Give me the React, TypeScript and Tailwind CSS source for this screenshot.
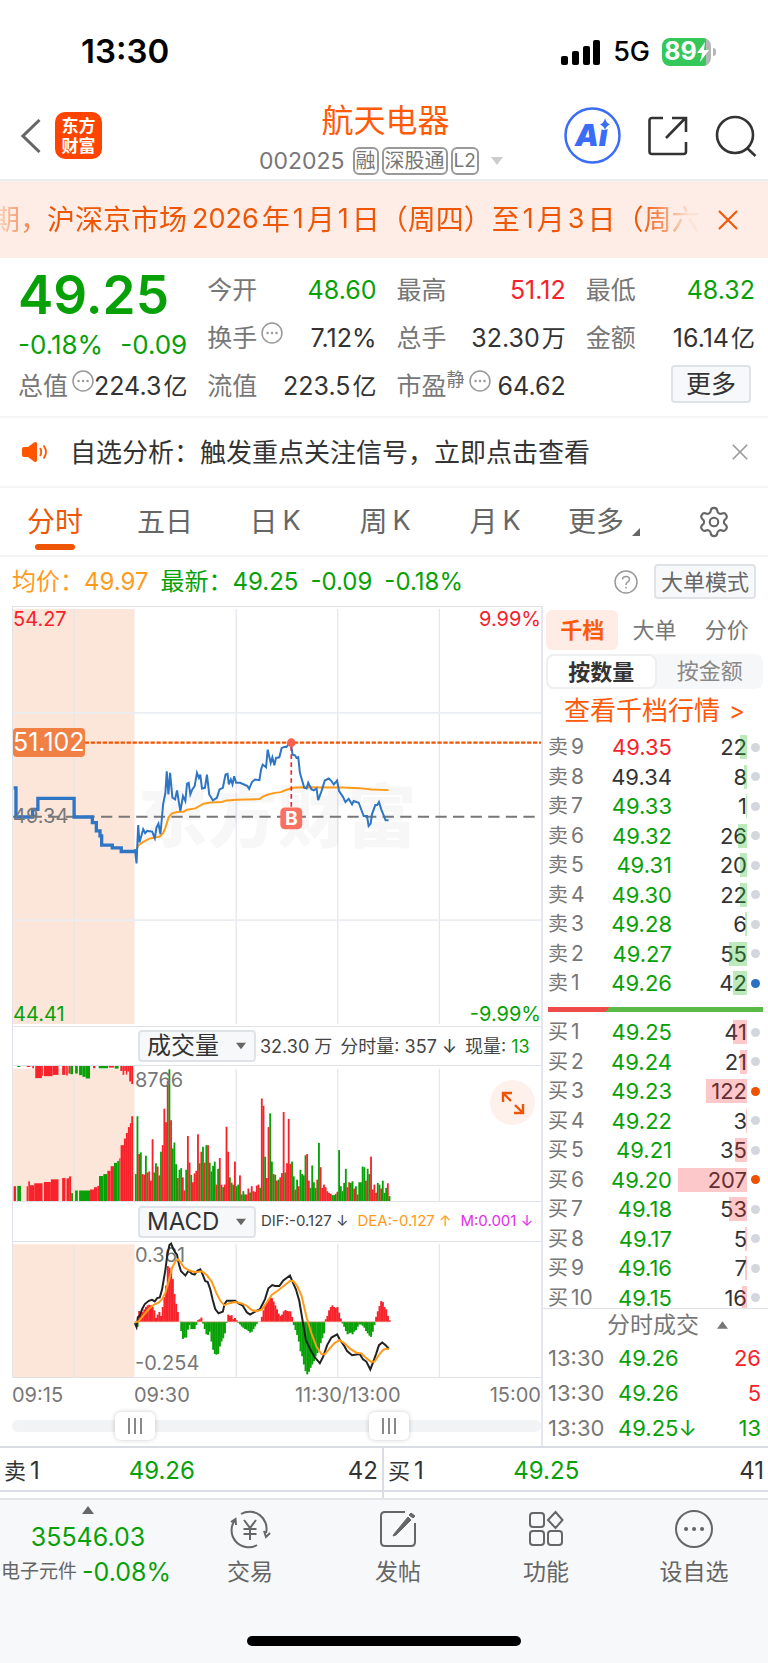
import { useState } from "react";
import { Settings } from "lucide-react";

type Level = {
	label: string;
	price: string;
	qty: number;
	priceColor?: string;
	dot?: string;
};

const GREEN = "text-[#07a107]";
const RED = "text-[#f7222a]";

const asks: Level[] = [
	{ label: "卖9", price: "49.35", qty: 22, priceColor: RED },
	{ label: "卖8", price: "49.34", qty: 8, priceColor: "text-[#333]" },
	{ label: "卖7", price: "49.33", qty: 1 },
	{ label: "卖6", price: "49.32", qty: 26 },
	{ label: "卖5", price: "49.31", qty: 20 },
	{ label: "卖4", price: "49.30", qty: 22 },
	{ label: "卖3", price: "49.28", qty: 6 },
	{ label: "卖2", price: "49.27", qty: 55 },
	{ label: "卖1", price: "49.26", qty: 42, dot: "bg-[#2b6fc4]" },
];

const bids: Level[] = [
	{ label: "买1", price: "49.25", qty: 41 },
	{ label: "买2", price: "49.24", qty: 21 },
	{ label: "买3", price: "49.23", qty: 122, dot: "bg-[#ee5200]" },
	{ label: "买4", price: "49.22", qty: 3 },
	{ label: "买5", price: "49.21", qty: 35 },
	{ label: "买6", price: "49.20", qty: 207, dot: "bg-[#ee5200]" },
	{ label: "买7", price: "49.18", qty: 53 },
	{ label: "买8", price: "49.17", qty: 5 },
	{ label: "买9", price: "49.16", qty: 7 },
	{ label: "买10", price: "49.15", qty: 16 },
];

const ticks = [
	{ time: "13:30", price: "49.26", qty: 26, color: RED },
	{ time: "13:30", price: "49.26", qty: 5, color: RED },
	{ time: "13:30", price: "49.25↓", qty: 13, color: GREEN },
];

// One entry per minute, negative = down bar
const volume = [
	-82, -258, 143, -148, 82, 80, -138, 87, 90, 62, 188, -87, -115, 105, 78, -150, 170, 281, 240, 365,
	-401, 246, -160, -178, -112, 70, -95, -100, 72, 32, -95, 198, 117, -80, 57, 84, 92, 203, -115, 150,
	-165, 117, -170, 170, -117, -90, -107, -120, 50, -98, 131, 50, -42, 50, 226, 150, -72, 56, -50, 120,
	-45, -50, 78, -20, -30, -20, 20, 38, -26, 45, 30, 28, 47, 50, -40, 312, 290, -135, 70, 225,
	-267, -120, 82, -80, 62, -65, 72, 85, 271, -87, 115, 250, 113, -120, -75, 35, -65, 45, -95, -82,
	-78, -139, 143, 62, -40, -108, -57, -40, 65, -177, 103, 40, 50, 42, 30, 25, 22, -18, -18, -22,
	28, -155, -45, -30, -55, -98, 42, 57, -55, -60, 38, -45, 20, -57, -57, -105, -103, 62, -98, -82,
	135, 35, 50, 25, -55, -50, 38, -62, -25, -40, 54, -15,
];

const macd = [
	-8, -15, 33, 30, 30, 38, 45, 50, 52, 50, 45, 35, 12, 22, 30, 18, 45, 75, 110, 170,
	165, 155, 130, 85, 55, 30, 0, -28, -52, -48, -48, -24, -10, -22, -22, -22, -10, 5, 8, 13,
	-5, -22, -38, -40, -30, -60, -85, -98, -100, -98, -75, -60, -50, -35, -3, 22, 18, 20, 8, 12,
	5, -3, -8, -14, -18, -22, -24, -28, -33, -30, -22, -14, -6, 0, 0, 15, 35, 48, 58, 68,
	75, 72, 62, 50, 38, 25, 18, 22, 32, 36, 33, 32, 32, 15, -10, -25, -40, -60, -90, -105,
	-130, -150, -160, -152, -140, -130, -120, -105, -95, -85, -65, -50, -35, 8, 18, 35, 45, 50, 45, 42,
	45, 28, 10, -5, -15, -28, -38, -35, -33, -38, -30, -25, -15, -8, -8, -12, -18, -28, -35, -42,
	-46, -30, -10, 15, 32, 48, 63, 60, 45, 38, 18, 5,
];

// [x1, x2, height], call auction before the open
const auctionMatched = [
	[38, 45, 45], [49, 60, -46], [77, 81, 45], [82, 87, 60], [87, 100, 48], [100, 125, 54], [129, 150, 58],
	[150, 173, 66], [184, 194, 70], [197, 205, 69], [205, 211, 75], [211, 217, -24], [223, 231, -32],
	[235, 268, -32], [268, 280, 35], [280, 290, 42], [290, 295, 46], [295, 308, -76], [308, 320, -82],
	[320, 330, 92], [330, 340, 106], [340, 350, -116], [350, 356, -122], [356, 360, 130], [360, 370, 170],
	[370, 376, 190], [376, 382, 207], [382, 388, 225], [388, 392, 237], [392, 398, 258],
];

const auctionUnmatched = [
	[49, 58, -3], [77, 88, 3], [94, 99, 7], [103, 123, 37], [123, 126, 30], [129, 155, 31], [155, 173, 27],
	[184, 194, 27], [196, 201, 29], [203, 209, 23], [209, 217, -25], [223, 231, -23], [235, 245, -28],
	[245, 255, -33], [255, 268, -38], [277, 284, 7], [294, 322, -7], [324, 340, 5], [342, 354, -8],
	[359, 366, 15], [366, 371, 27], [371, 376, 15], [376, 380, 26], [380, 386, 17], [386, 392, 47], [392, 398, 55],
];

const AUCTION_LINE =
	"38,560 45,560 45,648 95,648 95,625 111,625 111,592 220,592 220,648 275,648 275,665 287,665 287,690 298,690 298,705 303,705 303,733 335,733 335,741 362,741 362,752 403,752";

const PRICE_LINE =
	"403,745 408,788 413,672 417,725 428,685 434,697 440,690 455,692 463,712 468,680 474,668 480,700 488,610 495,575 499,510 504,580 509,515 516,590 524,595 530,568 535,600 540,630 548,585 555,600 560,548 565,545 570,580 576,565 583,555 590,515 596,530 600,520 605,562 614,560 620,520 627,580 638,598 650,590 658,565 668,560 676,520 682,518 686,550 692,535 697,550 702,525 708,545 720,545 742,555 747,563 756,542 765,535 778,537 783,505 788,490 798,498 803,445 812,485 817,468 823,492 828,470 838,468 845,440 855,436 860,437 868,425 873,428 878,460 885,462 890,470 895,468 900,515 913,560 920,562 925,545 935,565 942,568 950,562 955,597 965,570 975,538 987,532 995,540 1002,550 1012,538 1018,570 1030,588 1037,603 1047,593 1057,610 1062,600 1077,605 1092,645 1102,645 1107,675 1113,668 1117,640 1127,612 1133,612 1138,603 1145,625 1158,658 1167,658";

const AVERAGE_LINE =
	"408,745 415,732 430,722 445,714 463,710 478,707 488,697 495,680 505,648 515,637 530,633 550,632 560,626 585,622 610,608 630,604 665,603 680,598 710,596 778,594 790,586 805,580 820,576 842,573 860,566 880,560 910,558 1030,559 1080,561 1115,565 1167,567";

const DIF_LINE =
	"403,368 408,380 412,350 418,345 425,325 433,310 445,300 455,297 463,302 470,292 478,290 485,265 490,235 495,205 500,165 507,130 512,126 518,140 524,152 530,160 536,190 542,210 550,218 555,223 565,208 575,218 583,220 592,208 600,204 605,215 615,240 622,242 630,265 637,295 645,325 655,338 668,333 673,310 680,300 705,300 715,308 728,315 740,335 750,342 765,333 780,325 795,295 805,262 817,252 825,255 838,255 850,238 870,223 877,240 888,265 898,300 908,360 918,420 935,455 945,472 960,490 970,470 982,435 995,412 1012,402 1020,418 1032,435 1042,453 1057,466 1080,462 1090,478 1100,485 1112,509 1120,488 1130,460 1138,435 1148,427 1158,435 1168,446";

const DEA_LINE =
	"403,366 415,362 428,345 445,325 460,312 475,305 485,295 495,275 505,240 515,200 525,180 533,173 540,182 550,197 565,207 585,213 605,210 620,222 635,243 648,275 660,300 672,313 685,308 705,304 725,308 740,315 755,328 770,332 785,327 800,305 815,282 835,268 855,252 870,240 880,240 892,255 905,285 920,350 935,400 950,440 965,462 975,463 990,445 1005,428 1020,420 1035,430 1050,445 1070,458 1085,460 1100,475 1115,486 1125,485 1140,462 1152,448 1168,446";

const barColor = (v: number) => (v < 0 ? "#07a107" : "#f7222a");
const barX = (i: number) => 403 + i * 5.06;

const Triangle = ({ className, up }: { className: string; up?: boolean }) => (
	<svg viewBox="0 0 12 8" className={className} fill="currentColor" aria-hidden="true">
		<path d={up ? "M6 0 12 8H0Z" : "M0 0H12L6 8Z"} />
	</svg>
);

const Close = ({ className }: { className: string }) => (
	<svg viewBox="0 0 20 20" className={className} fill="none" stroke="currentColor" strokeWidth="2" aria-hidden="true">
		<path d="M1 1 19 19M19 1 1 19" />
	</svg>
);

const MoreInfo = () => (
	<svg viewBox="0 0 22 22" className="mb-3 ml-1 size-[22px] shrink-0 text-[#999]" fill="none" stroke="currentColor" aria-hidden="true">
		<circle cx="11" cy="11" r="10" strokeWidth="1.5" />
		<path d="M6.5 11h.1M11 11h.1M15.5 11h.1" strokeWidth="2.4" strokeLinecap="round" />
	</svg>
);

const StatusBar = () => (
	<div className="flex h-[100px] items-center justify-between pt-1 pr-[52px] pl-[81px] text-black">
		<span className="text-[33px] font-semibold">13:30</span>
		<div className="flex items-center gap-3">
			<svg viewBox="0 0 40 25" className="h-[25px] w-10" aria-hidden="true">
				<rect x="0" y="16" width="7" height="9" rx="2" />
				<rect x="11" y="11" width="7" height="14" rx="2" />
				<rect x="22" y="6" width="7" height="19" rx="2" />
				<rect x="32" y="0" width="7" height="25" rx="2" />
			</svg>
			<span className="text-[27px] font-medium">5G</span>
			<div className="flex items-center gap-[2px]">
				<div className="flex h-7 w-[49px] items-center justify-center rounded-lg bg-[linear-gradient(90deg,#34c759_89%,#b5b5b5_89%)] text-white">
					<span className="text-[25px] font-bold">89</span>
					<svg viewBox="0 0 12 20" className="h-5 w-3" fill="currentColor" aria-hidden="true">
						<path d="M8 0 0 11h5L3 20 12 8H7Z" />
					</svg>
				</div>
				<div className="h-2 w-[3px] rounded-r bg-[#b5b5b5]" />
			</div>
		</div>
	</div>
);

const Header = () => (
	<header className="grid h-[81px] grid-cols-[1fr_auto_1fr] items-center border-b-2 border-[#ebedf0] pr-[11px] pl-[21px]">
		<div className="flex items-center gap-[14px] pb-2">
			<button aria-label="返回">
				<svg viewBox="0 0 20 34" className="h-[34px] w-5 text-[#666]" fill="none" stroke="currentColor" strokeWidth="3">
					<path d="M18.500 1 2 17 18.500 33" />
				</svg>
			</button>
			<a
				href="#home"
				className="flex size-[47px] flex-col items-center justify-center rounded-[10px] bg-[#ff4400] text-[17px] leading-5 font-bold text-white"
			>
				<span>东方</span>
				<span>财富</span>
			</a>
		</div>
		<div className="flex flex-col items-center pr-[15px] pb-[2px]">
			<h1 className="pl-2 text-[32px] leading-9 text-[#ff5a0a]">航天电器</h1>
			<button className="mt-2 flex items-center gap-[3px] text-[#777]">
				<span className="mr-[5px] text-[23px] leading-7">002025</span>
				<span className="rounded-md border-2 border-[#999] px-px text-[20px] leading-6">融</span>
				<span className="rounded-md border-2 border-[#999] px-px text-[20px] leading-6">深股通</span>
				<span className="rounded-md border-2 border-[#999] px-px text-[19px] leading-6">L2</span>
				<Triangle className="ml-2 h-2 w-[14px] text-[#ccc]" />
			</button>
		</div>
		<div className="flex items-center justify-end gap-[27px] pb-2 text-[#333]">
			<button aria-label="Ai">
				<svg viewBox="0 0 57 57" className="size-[57px]" aria-hidden="true">
					<circle cx="28.500" cy="28.500" r="27" fill="none" stroke="#3a6cf6" strokeWidth="2.500" />
					<text x="11" y="39" fontSize="30" fontWeight="900" fontStyle="italic" fill="#3a6cf6">
						Ai
					</text>
					<circle cx="40" cy="17" r="6" fill="#fff" />
					<path d="M41 11Q42 16 46 17.500 42 19 41 23 40 19 36 17.500 40 16 41 11Z" fill="#3a6cf6" />
				</svg>
			</button>
			<button aria-label="分享">
				<svg viewBox="0 0 40 40" className="size-10" fill="none" stroke="currentColor" strokeWidth="2.600">
					<path d="M15 2H4Q1.500 2 1.500 4.500V35.500Q1.500 38 4 38H35.500Q38 38 38 35.500V26M18 22 37 2.500M24 2H38V16" />
				</svg>
			</button>
			<button aria-label="搜索">
				<svg viewBox="0 0 42 42" className="size-[42px]" fill="none" stroke="currentColor" strokeWidth="2.600">
					<circle cx="20" cy="20" r="18" />
					<path d="M32 33 40.500 41" />
				</svg>
			</button>
		</div>
	</header>
);

const Notice = () => (
	<div className="flex h-[77px] items-center justify-between gap-5 bg-[#fdede6] pr-[30px] text-[#ee5606]">
		<p className="flex min-w-0 flex-1 items-center gap-[3px] overflow-hidden text-[28px] whitespace-nowrap [mask-image:linear-gradient(90deg,#0003,#000_50px,#000_640px,#0001_690px)]">
			<span className="-ml-2">期，</span>
			<span className="-ml-1">沪深京市场</span>
			<span className="ml-[2px] text-[27px]">2026</span>年<span className="text-[27px]">1</span>月
			<span className="text-[27px]">1</span>日（周四）至<span className="text-[27px]">1</span>月
			<span className="text-[27px]">3</span>日（周六）
		</p>
		<button aria-label="关闭公告">
			<Close className="size-5" />
		</button>
	</div>
);

type CellProps = { label: string; value: string; unit?: string; color?: string; info?: boolean; sup?: string };

const Cell = ({ label, value, unit, color = "text-[#333]", info, sup }: CellProps) => (
	<div className="flex h-12 items-center">
		<span className="shrink-0 text-[25px] text-[#777]">{label}</span>
		{sup && <span className="mb-4 text-[18px] text-[#777]">{sup}</span>}
		{info && <MoreInfo />}
		<span className={`ml-auto flex items-center gap-[2px] text-[25px] whitespace-nowrap ${color}`}>
			{value}
			{unit && <span className="text-[24px]">{unit}</span>}
		</span>
	</div>
);

const Quote = () => (
	<section className="grid grid-cols-4 gap-x-5 border-b-2 border-[#f3f4f6] pt-[9px] pr-[13px] pb-[5px] pl-[18px]">
		<div className={`row-span-2 flex flex-col ${GREEN}`}>
			<strong className="text-[53px] leading-[56px] font-semibold">49.25</strong>
			<div className="mt-1 flex justify-between text-[26px] leading-9">
				<span>-0.18%</span>
				<span>-0.09</span>
			</div>
		</div>
		<Cell label="今开" value="48.60" color={GREEN} />
		<Cell label="最高" value="51.12" color={RED} />
		<Cell label="最低" value="48.32" color={GREEN} />
		<Cell label="换手" value="7.12%" info />
		<Cell label="总手" value="32.30" unit="万" />
		<Cell label="金额" value="16.14" unit="亿" />
		<Cell label="总值" value="224.3" unit="亿" info />
		<Cell label="流值" value="223.5" unit="亿" />
		<Cell label="市盈" value="64.62" sup="静" info />
		<div className="flex items-center justify-end pr-1 pb-[6px]">
			<button className="h-[38px] w-20 rounded border-2 border-[#dfe3e8] bg-[#f7f8fa] text-[25px] leading-8 text-[#333]">更多</button>
		</div>
	</section>
);

const AnalysisTip = () => (
	<div className="flex h-[70px] items-center border-b-2 border-[#f3f4f6] pr-5 pl-[22px]">
		<svg viewBox="0 0 26 20" className="mr-[22px] h-5 w-[26px] text-[#ff5400]" fill="currentColor" aria-hidden="true">
			<path d="M2 5H6L12 .5Q15 -1 15 2V18Q15 21 12 19.500L6 15H2Q0 15 0 13V7Q0 5 2 5Z" />
			<path d="M18 6Q20.500 10 18 14M21.500 3.500Q26.500 10 21.500 16.500" fill="none" stroke="currentColor" strokeWidth="1.800" />
		</svg>
		<a href="#analysis" className="text-[26px] text-[#333]">
			自选分析：触发重点关注信号，立即点击查看
		</a>
		<button aria-label="关闭提示" className="ml-auto text-[#999]">
			<Close className="size-4" />
		</button>
	</div>
);

const tabs = [
	{ cn: "分时" },
	{ cn: "五日" },
	{ cn: "日", en: "K" },
	{ cn: "周", en: "K" },
	{ cn: "月", en: "K" },
];

const PeriodTabs = () => {
	const [active, setActive] = useState(0);
	return (
		<nav className="flex h-[69px] items-stretch border-b-2 border-[#f3f4f6] text-[28px] text-[#666]">
			{tabs.map((tab, i) => (
				<button
					key={tab.cn}
					onClick={() => setActive(i)}
					className={`relative flex w-[110px] items-center justify-center gap-[5px] ${active === i ? "text-[#ee5606]" : ""}`}
				>
					{tab.cn}
					{tab.en && <span className="text-[27px]">{tab.en}</span>}
					{active === i && <span className="absolute bottom-[5px] h-[6px] w-10 rounded-full bg-[#ee5606]" />}
				</button>
			))}
			<button className="ml-[18px] flex items-center gap-2">
				更多
				<svg viewBox="0 0 8 8" className="mt-5 size-2" fill="currentColor" aria-hidden="true">
					<path d="M8 0V8H0Z" />
				</svg>
			</button>
			<button aria-label="设置" className="mr-[37px] ml-auto">
				<Settings className="size-[34px]" strokeWidth={1.5} />
			</button>
		</nav>
	);
};

const PriceSummary = () => (
	<div className={`flex h-[49px] items-center px-3 text-[24px] ${GREEN}`}>
		<span className="text-[#ff9b1a]">均价：</span>
		<span className="text-[#ff9b1a]">49.97</span>
		<span className="ml-3">最新：</span>
		<span>49.25</span>
		<span className="ml-3">-0.09</span>
		<span className="ml-3">-0.18%</span>
		<button aria-label="帮助" className="ml-auto text-[#999]">
			<svg viewBox="0 0 24 24" className="size-6" fill="none" stroke="currentColor" strokeWidth="1.500">
				<circle cx="12" cy="12" r="11" />
				<path d="M8.500 9.500Q8.500 6.500 12 6.500 15.500 6.500 15.500 9.500 15.500 11 13.500 12.200 12 13 12 15M12 17V18.500" />
			</svg>
		</button>
		<button className="ml-4 h-[35px] rounded border-2 border-[#dfe3e8] bg-[#f7f8fa] px-[5px] text-[22px] leading-7 text-[#666]">大单模式</button>
	</div>
);

const Grid = ({ top, bottom }: { top: number; bottom: number }) => (
	<g stroke="#e4e7ed" strokeWidth="4">
		{[219, 708, 1014, 1320].map((x) => (
			<line key={x} x1={x} x2={x} y1={top} y2={bottom} />
		))}
	</g>
);

const PriceChart = () => (
	<div className="relative h-[421px] border-y border-[#dfe2e7] text-[20px] leading-6">
		<svg viewBox="36 15 1590 1263" preserveAspectRatio="none" className="size-full" fill="none">
			<rect x="36" y="21" width="366" height="1251" fill="#fce6da" />
			<Grid top={21} bottom={1272} />
			<path d="M36 334H1626M36 959H1626" stroke="#eaedf2" strokeWidth="5" />
			<text x="412" y="724" fontSize="210" fontWeight="900" fill="#000" fillOpacity="0.03">
				东方财富
			</text>
			<path d="M36 647H1626" stroke="#777" strokeWidth="6" strokeDasharray="34 19" />
			<path d="M36 424H1626" stroke="#ee5606" strokeWidth="7" strokeDasharray="13 5" />
			<polyline points={AVERAGE_LINE} stroke="#ff9b1a" strokeWidth="6" />
			<polyline points={AUCTION_LINE} stroke="#2f75c5" strokeWidth="10" />
			<polyline points={PRICE_LINE} stroke="#2f75c5" strokeWidth="6" />
			<path d="M874 435V620" stroke="#f7222a" strokeWidth="5" strokeDasharray="14 10" />
			<circle cx="874" cy="424" r="13" fill="#f9604f" />
			<rect x="841" y="619" width="66" height="66" rx="14" fill="#fb7161" />
			<text x="874" y="673" textAnchor="middle" fontSize="58" fontWeight="700" fill="#fff">
				B
			</text>
		</svg>
		<span className={`absolute top-0 left-0 ${RED}`}>54.27</span>
		<span className={`absolute top-0 right-0 ${RED}`}>9.99%</span>
		<span className="absolute top-[121px] left-0 rounded bg-[#f08043] text-[25px] leading-[29px] text-white">51.102</span>
		<span className="absolute top-[197px] left-0 text-[#777]">49.34</span>
		<span className={`absolute bottom-0 left-0 ${GREEN}`}>44.41</span>
		<span className={`absolute right-0 bottom-0 ${GREEN}`}>-9.99%</span>
	</div>
);

const IndicatorSelect = ({ label, options }: { label: string; options: string[] }) => (
	<div className="relative ml-[125px] h-8 w-[118px] shrink-0 text-[#333]">
		<select
			aria-label={label}
			className="size-full appearance-none rounded border-2 border-[#dfe3e8] bg-[#f7f8fa] pl-[7px] text-[24px] leading-7"
		>
			{options.map((o) => (
				<option key={o}>{o}</option>
			))}
		</select>
		<Triangle className="pointer-events-none absolute top-3 right-[10px] h-2 w-[10px] text-[#666]" />
	</div>
);

const VolumeChart = () => (
	<div className="relative h-[137px] border-y border-[#dfe2e7]">
		<svg viewBox="36 134 1590 411" preserveAspectRatio="none" className="size-full">
			<rect x="36" y="142" width="366" height="402" fill="#fce6da" />
			{auctionMatched.map(([x1, x2, h]) => (
				<rect key={x1} x={x1} y={545 - Math.abs(h)} width={x2 - x1} height={Math.abs(h)} fill={barColor(h)} />
			))}
			{auctionUnmatched.map(([x1, x2, h]) => (
				<rect key={x1} x={x1} y="134" width={x2 - x1} height={Math.abs(h)} fill={barColor(h)} />
			))}
			<Grid top={142} bottom={545} />
			{volume.map((v, i) => (
				<rect key={i} x={barX(i)} y={545 - Math.abs(v)} width="5.500" height={Math.abs(v)} fill={barColor(v)} />
			))}
		</svg>
		<span className="absolute top-0 left-[122px] text-[20px] leading-7 text-[#777]">8766</span>
		<button aria-label="全屏" className="absolute top-[14px] right-[6px] flex size-[45px] items-center justify-center rounded-full bg-[#fef1ec] text-[#ee5606]">
			<svg viewBox="0 0 24 24" className="size-6" fill="none" stroke="currentColor" strokeWidth="2.400">
				<path d="M2 11V2H11M2 2 10 10M22 13V22H13M22 22 14 14" />
			</svg>
		</button>
	</div>
);

const MacdChart = () => (
	<div className="relative h-[137px] border-y border-[#dfe2e7] text-[20px] leading-6 text-[#777]">
		<span className="absolute top-px left-[122px]">0.361</span>
		<span className="absolute bottom-[2px] left-[122px]">-0.254</span>
		<svg viewBox="36 121 1590 411" preserveAspectRatio="none" className="relative size-full" fill="none">
			<rect x="36" y="128" width="366" height="404" fill="#fce6da" />
			<Grid top={128} bottom={532} />
			{macd.map((v, i) => (
				<rect key={i} x={barX(i)} y={v < 0 ? 364 : 364 - v} width="6" height={Math.abs(v)} fill={barColor(v)} />
			))}
			<path d="M403 364H1168" stroke="#e9a08c" strokeWidth="2" />
			<polyline points={DIF_LINE} stroke="#222" strokeWidth="6" />
			<polyline points={DEA_LINE} stroke="#ff9b1a" strokeWidth="6" />
		</svg>
	</div>
);

const thumb =
	"pointer-events-none absolute inset-x-0 top-0 h-7 w-full appearance-none bg-transparent [&::-webkit-slider-thumb]:pointer-events-auto [&::-webkit-slider-thumb]:h-7 [&::-webkit-slider-thumb]:w-10 [&::-webkit-slider-thumb]:appearance-none [&::-webkit-slider-thumb]:rounded-md [&::-webkit-slider-thumb]:bg-white [&::-webkit-slider-thumb]:bg-[repeating-linear-gradient(90deg,#888_0_2px,transparent_2px_6px)] [&::-webkit-slider-thumb]:bg-[length:14px_16px] [&::-webkit-slider-thumb]:bg-center [&::-webkit-slider-thumb]:bg-no-repeat [&::-webkit-slider-thumb]:shadow-[0_0_5px_#0003]";

const RangeSlider = () => {
	const [from, setFrom] = useState(21);
	const [to, setTo] = useState(73);
	return (
		<div className="relative flex h-7 items-center">
			<div className="h-3 w-full rounded-full bg-[#f2f3f5]" />
			<input type="range" aria-label="起始时间" value={from} onChange={(e) => setFrom(+e.target.value)} className={thumb} />
			<input type="range" aria-label="结束时间" value={to} onChange={(e) => setTo(+e.target.value)} className={thumb} />
		</div>
	);
};

const Charts = () => (
	<div className="min-w-0 border-r-2 border-[#e4e7ed] pl-3">
		<div className="border-l border-[#dfe2e7]">
			<PriceChart />
			<div className="flex h-[38px] items-center text-[18px] whitespace-nowrap text-[#444]">
				<IndicatorSelect label="副图指标一" options={["成交量", "成交额", "量比"]} />
				<span className="ml-1">32.30 万</span>
				<span className="ml-2">分时量: 357 ↓</span>
				<span className="ml-2">
					现量: <span className={GREEN}>13</span>
				</span>
			</div>
			<VolumeChart />
			<div className="flex h-[39px] items-center gap-[9px] text-[15px] whitespace-nowrap">
				<IndicatorSelect label="副图指标二" options={["MACD", "KDJ", "RSI"]} />
				<span className="-ml-1 text-[#444]">DIF:-0.127 ↓</span>
				<span className="text-[#ff9b1a]">DEA:-0.127 ↑</span>
				<span className="text-[#e22fe8]">M:0.001 ↓</span>
			</div>
			<MacdChart />
		</div>
		<div className="grid h-[34px] grid-cols-[122px_1fr] items-center text-[20px] leading-[30px] text-[#777]">
			<span>09:15</span>
			<div className="flex justify-between">
				<span>09:30</span>
				<span className="pl-12">11:30/13:00</span>
				<span className="pl-8">15:00</span>
			</div>
		</div>
		<RangeSlider />
	</div>
);

const Depth = ({ levels, tint }: { levels: Level[]; tint: string }) => (
	<table className="w-full table-fixed text-[22px] leading-7">
		<tbody>
			{levels.map((level, i) => (
				<tr key={level.label} className={i % 2 ? "h-[29px]" : "h-[30px]"}>
					<th scope="row" className="w-14 p-0 pl-[5px] text-left font-normal text-[#777]">
						<span className="flex items-center gap-[3px] text-[20px]">
							{level.label[0]}
							<span className="text-[21px]">{level.label.slice(1)}</span>
						</span>
					</th>
					<td className={`p-0 text-right ${level.priceColor ?? GREEN}`}>{level.price}</td>
					<td className="w-24 p-0 pr-2">
						<div className="flex items-center justify-end gap-1">
							<span className="relative flex h-6 items-center text-[#333]">
								{level.qty}
								<span className={`absolute inset-y-0 right-0 ${tint}`} style={{ width: Math.max(1, level.qty / 3) }} />
							</span>
							<span className={`size-[9px] rounded-full ${level.dot ?? "bg-[#d3d6dc]"}`} />
						</div>
					</td>
				</tr>
			))}
		</tbody>
	</table>
);

const OrderBook = () => (
	<aside className="flex flex-col">
		<div className="mt-1 flex h-10 pr-[5px] pl-[3px] text-[22px] text-[#777]">
			<button className="flex-1 rounded-md bg-[#ffece4] font-bold text-[#ff5a0a]">千档</button>
			<button className="flex-1">大单</button>
			<button className="flex-1">分价</button>
		</div>
		<div className="mt-1 mr-[5px] ml-[3px] flex h-[35px] rounded-lg bg-[#f6f7f9] text-[22px] text-[#888]">
			<button className="flex-1 rounded-lg border-2 border-[#eeeff1] bg-white leading-7 font-bold text-[#333]">按数量</button>
			<button className="flex-1">按金额</button>
		</div>
		<a href="#depth" className="flex h-[43px] items-center justify-center gap-[9px] pr-[2px] text-[26px] text-[#ff5a0a]">
			查看千档行情 <span className="text-[24px]">&gt;</span>
		</a>
		<Depth levels={asks} tint="bg-[#22b822]/30" />
		<div className="mt-[9px] mr-[5px] mb-[5px] ml-[5px] h-[5px] bg-[linear-gradient(120deg,#ee4b4b_28%,#5cb947_28%)]" />
		<div className="h-[291px] overflow-hidden">
			<Depth levels={bids} tint="bg-[#f7222a]/25" />
		</div>
		<div className="flex flex-1 flex-col border-t border-[#dfe2e7]">
			<button className="flex h-8 items-center justify-center gap-[18px] pl-6 text-[23px] text-[#777]">
				分时成交 <Triangle up className="h-2 w-[11px]" />
			</button>
			<table className="w-full text-[22px]">
				<tbody>
					{ticks.map((tick, i) => (
						<tr key={i} className="h-[35px]">
							<td className="w-[75px] p-0 pl-[5px] text-[#777]">{tick.time}</td>
							<td className={`p-0 ${GREEN}`}>{tick.price}</td>
							<td className={`p-0 pr-[7px] text-right ${tick.color}`}>{tick.qty}</td>
						</tr>
					))}
				</tbody>
			</table>
		</div>
	</aside>
);

const BestLevel = ({ side, price, qty }: { side: string; price: string; qty: number }) => (
	<div className="grid h-11 grid-cols-3 items-center border-b-2 border-[#d9dce3] px-1 pt-1 text-[24px] text-[#333]">
		<span className="flex items-center gap-1">
			<span className="text-[22px]">{side}</span>1
		</span>
		<span className={GREEN}>{price}</span>
		<span className="text-right">{qty}</span>
	</div>
);

const icons = [
	{
		label: "交易",
		d: "M6 12A17 17 0 0 0 28 37M12 6A17 17 0 0 1 37 25M2 14 6.500 11 7 17M41 25 37 29 35 23M15 12 21 20 27 12M21 20V32M14.500 21H27.500M14.500 26H27.500",
	},
	{
		label: "发帖",
		d: "M28 4H8Q4 4 4 8V34Q4 38 8 38H34Q38 38 38 34V15",
	},
	{
		label: "功能",
		d: "M8 5H16Q19 5 19 8V16Q19 19 16 19H8Q5 19 5 16V8Q5 5 8 5ZM8 23H16Q19 23 19 26V34Q19 37 16 37H8Q5 37 5 34V26Q5 23 8 23ZM26 23H34Q37 23 37 26V34Q37 37 34 37H26Q23 37 23 34V26Q23 23 26 23ZM30.500 4 37.500 12 30.500 20 23 12Z",
	},
	{
		label: "设自选",
		d: "M21 3A18 18 0 1 1 21 39A18 18 0 1 1 21 3Z",
	},
];

const BottomBar = () => (
	<footer className="border-t-2 border-[#e3e5e9] bg-[#f7f8fa] pb-[17px]">
		<div className="grid grid-cols-[176px_repeat(4,1fr)] text-[#666]">
			<a href="#index" className="flex flex-col items-center pt-[6px] text-[25px]">
				<Triangle up className="h-2 w-[14px]" />
				<span className={`mt-2 leading-[30px] ${GREEN}`}>35546.03</span>
				<span className="mt-[2px] flex items-center gap-[5px] pr-1 leading-9 whitespace-nowrap">
					<span className="text-[19px]">电子元件</span>
					<span className={GREEN}>-0.08%</span>
				</span>
			</a>
			{icons.map(({ label, d }) => (
				<button key={label} className="flex flex-col items-center pt-2 text-[23px]">
					<svg viewBox="0 0 42 42" className="size-[42px]" fill="none" stroke="currentColor" strokeWidth="2" aria-hidden="true">
						<path d={d} />
						{label === "发帖" && <path d="M17 26 31 9 34 12 19 27 16 28ZM34 5 38 8 36 10 32 7Z" fill="currentColor" strokeWidth="1" />}
						{label === "设自选" && <path d="M13 21h.1M21 21h.1M29 21h.1" strokeWidth="4" strokeLinecap="round" />}
					</svg>
					<span className="mt-1 leading-9">{label}</span>
				</button>
			))}
		</div>
		<div className="mx-auto mt-[46px] h-[10px] w-[274px] rounded-full bg-black" />
	</footer>
);

export default function App() {
	return (
		<main className="w-full overflow-hidden bg-white font-['Inter','Noto_Sans_CJK_SC',sans-serif]">
			<StatusBar />
			<Header />
			<Notice />
			<Quote />
			<AnalysisTip />
			<PeriodTabs />
			<PriceSummary />
			<section className="grid grid-cols-[1fr_225px] border-b-2 border-[#d9dce3]">
				<Charts />
				<OrderBook />
			</section>
			<div className="grid grid-cols-2 divide-x-2 divide-[#d9dce3]">
				<div className="pb-[6px]">
					<BestLevel side="卖" price="49.26" qty={42} />
				</div>
				<div className="pb-[6px]">
					<BestLevel side="买" price="49.25" qty={41} />
				</div>
			</div>
			<BottomBar />
		</main>
	);
}
